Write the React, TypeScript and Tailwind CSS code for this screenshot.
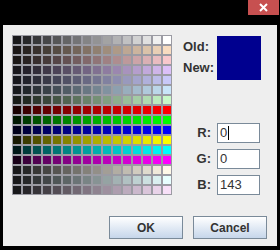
import React from "react"

const font = { fontFamily: '"Liberation Sans", Arial, sans-serif' }

type Row = { from: number[]; to: number[]; curve: number }

const hex = (s: string) => [1, 3, 5].map((i) => parseInt(s.slice(i, i + 2), 16))

const rows: Row[] = [
    ["#18181a", "#ffffff", 1],
    ["#1a1616", "#f8dcc0", 1],
    ["#1a1616", "#f8c8cc", 1],
    ["#18161c", "#dcc0f8", 1],
    ["#16161c", "#c8c8f8", 1],
    ["#16181c", "#c8e4f8", 1],
    ["#161a16", "#c8f8c8", 1],
    ["#180000", "#ff0000", 0.7],
    ["#001800", "#00ff00", 0.7],
    ["#000018", "#0000ff", 0.7],
    ["#181800", "#ffff00", 0.7],
    ["#001818", "#00ffff", 0.7],
    ["#180018", "#ff00ff", 0.7],
    ["#18181a", "#fff8e8", 1],
    ["#18181a", "#e8ffff", 1],
    ["#18181a", "#f8e0f8", 1],
].map(([a, b, c]) => ({ from: hex(a as string), to: hex(b as string), curve: c as number }))

const swatch = (row: Row, col: number) => {
    const t = Math.pow(col / 15, row.curve)
    const [r, g, b] = row.from.map((v, i) => Math.round(v + (row.to[i] - v) * t))
    return `rgb(${r},${g},${b})`
}

function Field({ label, value, caret }: { label: string; value: string; caret?: boolean }) {
    return (
        <div className="flex items-center">
            <span className="w-[45px] pr-[6px] text-right text-[13px] font-bold text-[#333333]">{label}</span>
            <div className="flex h-[20px] w-[43px] items-center border border-[#7a8a99] bg-white pl-[2px] text-[13px] text-[#333333]">
                {value}
                {caret && <span className="ml-[1px] h-[14px] w-px bg-black" />}
            </div>
        </div>
    )
}

function Button({ children }: { children: React.ReactNode }) {
    return (
        <div className="flex h-[23px] w-[74px] items-center justify-center border border-[#7a8a99] bg-gradient-to-b from-white to-[#c6d6ea] text-[12px] font-bold text-[#333333]">
            {children}
        </div>
    )
}

export default function App() {
    return (
        <div className="flex h-[250px] w-[280px] flex-col bg-black" style={font}>
            <div className="flex h-[25px] justify-end">
                <div className="mr-[1px] flex h-[15px] w-[31px] items-center justify-center bg-[#c75050]">
                    <svg width="9" height="9" viewBox="0 0 9 9">
                        <path d="M1 1L8 8M8 1L1 8" stroke="white" strokeWidth="2" />
                    </svg>
                </div>
            </div>

            <div className="mx-[3px] flex h-[221px] flex-col bg-[#eeeeee] pl-[9px] pr-[10px] pt-[10px]">
                <div className="flex">
                    <div className="grid grid-cols-[repeat(16,8px)] gap-[2px] bg-[#9b9ba3] p-px">
                        {rows.map((row, r) =>
                            Array.from({ length: 16 }, (_, c) => (
                                <div key={`${r}-${c}`} className="h-[8px] w-[8px]" style={{ background: swatch(row, c) }} />
                            )),
                        )}
                    </div>

                    <div className="flex h-[160px] flex-col justify-between">
                        <div className="flex pt-px">
                            <div className="flex w-[45px] flex-col gap-[6px] pl-[11px] pt-[3px] text-[13px] leading-[15px] font-bold text-[#333333]">
                                <span>Old:</span>
                                <span>New:</span>
                            </div>
                            <div className="flex h-[44px] w-[44px] flex-col">
                                <div className="h-[22px] bg-[#00008f]" />
                                <div className="h-[22px] bg-[#00008f]" />
                            </div>
                        </div>

                        <div className="flex flex-col gap-[6px]">
                            <Field label="R:" value="0" caret />
                            <Field label="G:" value="0" />
                            <Field label="B:" value="143" />
                        </div>
                    </div>
                </div>

                <div className="mt-[21px] flex justify-end gap-[10px]">
                    <Button>OK</Button>
                    <Button>Cancel</Button>
                </div>
            </div>
        </div>
    )
}
